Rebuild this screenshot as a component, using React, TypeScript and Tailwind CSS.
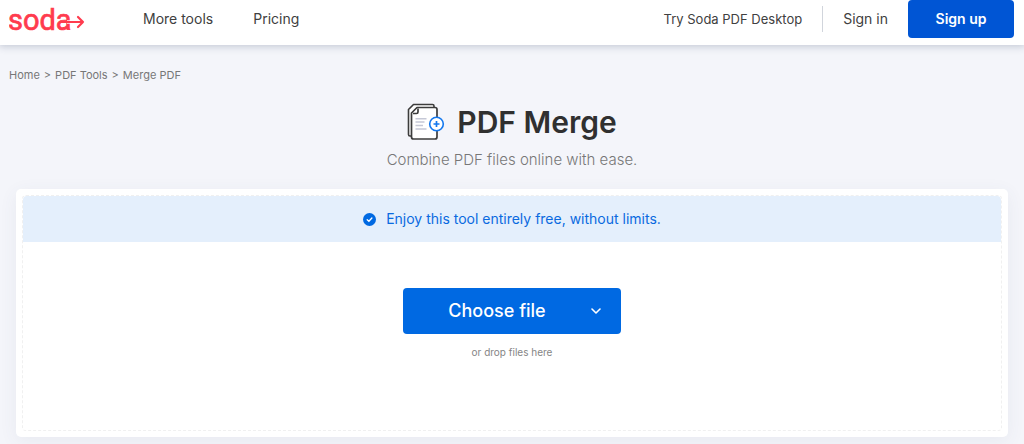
import React from "react";

function Logo() {
  return (
    <a href="#" aria-label="soda" className="block w-[76px] shrink-0">
      <svg width="76" height="36" viewBox="0 0 76 36" fill="none">
        <text
          x="-1"
          y="29"
          fill="#ff3b4e"
          stroke="#ff3b4e"
          strokeWidth="0.7"
          fontSize="29"
          fontFamily="Roboto, sans-serif"
        >
          soda
        </text>
        <path d="M58 21h15" stroke="#fff" strokeWidth="3.4" />
        <path
          d="M51 21h23M69 16l5 5-5 5"
          stroke="#ff3b4e"
          strokeWidth="2.2"
          strokeLinejoin="round"
          strokeLinecap="round"
        />
      </svg>
    </a>
  );
}

function Header() {
  return (
    <header className="relative flex items-center bg-white pb-[7px] pl-[9px] pr-[10px] text-sm text-[#404040] shadow-[0_1px_7px_1px_rgba(60,75,110,0.24)]">
      <Logo />
      <nav className="ml-[58px] flex gap-10">
        <a href="#">More tools</a>
        <a href="#">Pricing</a>
      </nav>
      <div className="ml-auto flex items-center">
        <a href="#" className="pr-5 text-[13px]">
          Try Soda PDF Desktop
        </a>
        <a href="#" className="border-l border-gray-300 py-[3px] pl-5 pr-5">
          Sign in
        </a>
        <button
          type="button"
          className="h-[38px] w-[106px] rounded bg-[#0055d4] font-semibold text-white"
        >
          Sign up
        </button>
      </div>
    </header>
  );
}

function MergeIcon() {
  return (
    <svg width="38" height="38" viewBox="0 0 38 38" fill="none">
      <path
        d="M6.5 1.5h19a1.5 1.5 0 0 1 1.5 1.5v30H3a1.5 1.5 0 0 1-1.500-1.500v-25z"
        fill="#fff"
        stroke="#3c3c3c"
        strokeWidth="1.6"
        strokeLinejoin="round"
      />
      <path
        d="M10 4.5h18a2 2 0 0 1 2 2V34a2 2 0 0 1-2 2H6.5a2 2 0 0 1-2-2V10z"
        fill="#fff"
        stroke="#3c3c3c"
        strokeWidth="1.7"
        strokeLinejoin="round"
      />
      <path d="M11 5.5V9a1.5 1.5 0 0 1-1.5 1.5H6" stroke="#3c3c3c" strokeWidth="1.7" />
      <path
        d="M8.5 15.8h11M8.500 19h9M8.5 22.5h7.500M8.5 26h11"
        stroke="#c5c8d6"
        strokeWidth="1.5"
      />
      <circle cx="29.5" cy="21" r="6.8" fill="#fff" stroke="#1478ee" strokeWidth="1.6" />
      <path d="M29.5 18v6M26.5 21h6" stroke="#1478ee" strokeWidth="1.7" />
    </svg>
  );
}

function DropZone() {
  return (
    <section className="mx-4 mt-[18px] rounded-[5px] bg-white p-[6px] shadow-[0_4px_18px_rgba(70,80,120,0.07)]">
      <div className="rounded border border-dashed border-[#f0f0f0] pb-[70px]">
        <div className="flex h-[46px] items-center justify-center gap-[10px] rounded-t bg-[#e4effc] text-sm text-[#0a6ae0]">
          <svg width="13" height="13" viewBox="0 0 13 13" fill="none">
            <circle cx="6.5" cy="6.5" r="6.5" fill="#0069e2" />
            <path
              d="M4.2 6.7l1.7 1.6 3-3.3"
              stroke="#fff"
              strokeWidth="1.3"
              strokeLinecap="round"
            />
          </svg>
          Enjoy this tool entirely free, without limits.
        </div>

        <div className="mx-auto mt-[46px] flex h-[46px] w-[218px] overflow-hidden rounded bg-[#0069e2] text-white">
          <button type="button" className="flex-1 pl-5 text-lg font-medium">
            Choose file
          </button>
          <button
            type="button"
            aria-label="More sources"
            className="flex w-[50px] items-center justify-center"
          >
            <svg width="10" height="6" viewBox="0 0 10 6" fill="none">
              <path
                d="M1 1l4 4 4-4"
                stroke="currentColor"
                strokeWidth="1.6"
                strokeLinecap="round"
                strokeLinejoin="round"
              />
            </svg>
          </button>
        </div>
        <p className="mt-[10px] text-center text-[10px] leading-4 text-[#858585]">
          or drop files here
        </p>
      </div>
    </section>
  );
}

export default function App() {
  return (
    <div className="min-h-screen bg-[#f4f5fa] pb-[6px] font-['Inter',sans-serif]">
      <Header />
      <main>
        <nav
          aria-label="Breadcrumb"
          className="flex gap-1 px-[9px] pt-[22px] text-[11px] leading-4 text-[#777]"
        >
          <a href="#">Home</a>
          <span>&gt;</span>
          <a href="#">PDF Tools</a>
          <span>&gt;</span>
          <a href="#">Merge PDF</a>
        </nav>

        <div className="mt-5 flex items-center justify-center gap-3">
          <MergeIcon />
          <h1 className="text-[30px] font-semibold leading-[38px] text-[#303030]">
            PDF Merge
          </h1>
        </div>
        <p className="mt-2 text-center text-[15px] font-light leading-[22px] text-[#777]">
          Combine PDF files online with ease.
        </p>
        <DropZone />
      </main>
    </div>
  );
}
